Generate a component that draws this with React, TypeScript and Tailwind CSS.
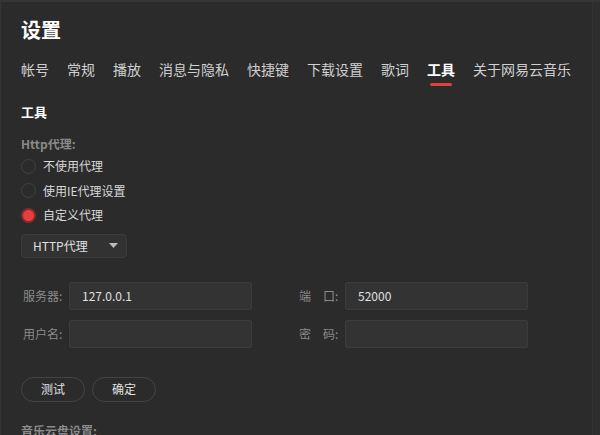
import React from "react";

const tabs = ["帐号", "常规", "播放", "消息与隐私", "快捷键", "下载设置", "歌词", "工具", "关于网易云音乐"];

const Radio = ({ label, checked }: { label: string; checked?: boolean }) => (
  <div className="flex items-center h-[24.5px]">
    {checked ? (
      <span className="flex justify-center items-center bg-[#8a2a2a] rounded-full w-[15px] h-[15px]">
        <span className="bg-[#e5403f] rounded-full w-[11px] h-[11px]" />
      </span>
    ) : (
      <span className="border-[1.5px] border-[#404040] rounded-full w-[15px] h-[15px]" />
    )}
    <span className="ml-[7px] text-[#d8d8d8] text-[12px]">{label}</span>
  </div>
);

const Field = ({ label, value }: { label: React.ReactNode; value?: string }) => (
  <div className="flex items-center">
    <span className="w-[46px] text-[#8a8a8a] text-[12px]">{label}</span>
    <div className="flex items-center bg-[#333333] px-[12px] border border-[#3b3b3b] rounded-[2px] w-[183px] h-[28px] text-[#e0e0e0] text-[12px]">
      {value}
    </div>
  </div>
);

export default function App() {
  return (
    <div
      className="flex bg-[#2b2b2b] border-[#353535] border-t-2 border-l w-[600px] h-[435px] overflow-hidden"
      style={{ fontFamily: '"Microsoft YaHei", "Noto Sans CJK SC", sans-serif' }}
    >
      <div className="flex-1 pl-[20px]">
        <h1 className="mt-[14px] font-bold text-[20px] text-white leading-[28px]">设置</h1>

        <div className="flex gap-[18px] mt-[15px]">
          {tabs.map((t) => (
            <div key={t} className="flex flex-col items-center">
              <span className={`text-[14px] leading-[20px] ${t === "工具" ? "text-white font-bold" : "text-[#d0d0d0]"}`}>{t}</span>
              {t === "工具" && <span className="bg-[#e0403f] mt-[4px] rounded-full w-[22px] h-[3px]" />}
            </div>
          ))}
        </div>

        <h2 className="mt-[16px] font-bold text-[13px] text-white leading-[20px]">工具</h2>

        <div className="mt-[14px] font-bold text-[#8a8a8a] text-[12px] leading-[16px]">Http代理:</div>
        <div className="flex flex-col mt-[2px]">
          <Radio label="不使用代理" />
          <Radio label="使用IE代理设置" />
          <Radio label="自定义代理" checked />
        </div>

        <div className="flex justify-between items-center bg-[#323232] mt-[6px] pr-[8px] pl-[11px] border border-[#3c3c3c] rounded-[4px] w-[106px] h-[24px]">
          <span className="text-[#e0e0e0] text-[12px]">HTTP代理</span>
          <svg width="9" height="5" viewBox="0 0 9 5">
            <path d="M0 0 L9 0 L4.5 5 Z" fill="#bbbbbb" />
          </svg>
        </div>

        <div className="gap-x-[47px] gap-y-[10px] grid grid-cols-[229px_229px] mt-[24px] pl-[2px]">
          <Field label="服务器:" value="127.0.0.1" />
          <Field label={<span>端<span className="inline-block w-[12px]" />口:</span>} value="52000" />
          <Field label="用户名:" />
          <Field label={<span>密<span className="inline-block w-[12px]" />码:</span>} />
        </div>

        <div className="flex gap-[7px] mt-[29px]">
          <button className="border border-[#444444] rounded-full w-[64px] h-[25px] text-[#e0e0e0] text-[12px]">测试</button>
          <button className="border border-[#444444] rounded-full w-[64px] h-[25px] text-[#e0e0e0] text-[12px]">确定</button>
        </div>

        <div className="mt-[20px] font-bold text-[#8a8a8a] text-[12px]">音乐云盘设置:</div>
      </div>
      <div className="bg-[#2e2e2e] border-[#333333] border-l w-[8px]" />
    </div>
  );
}
